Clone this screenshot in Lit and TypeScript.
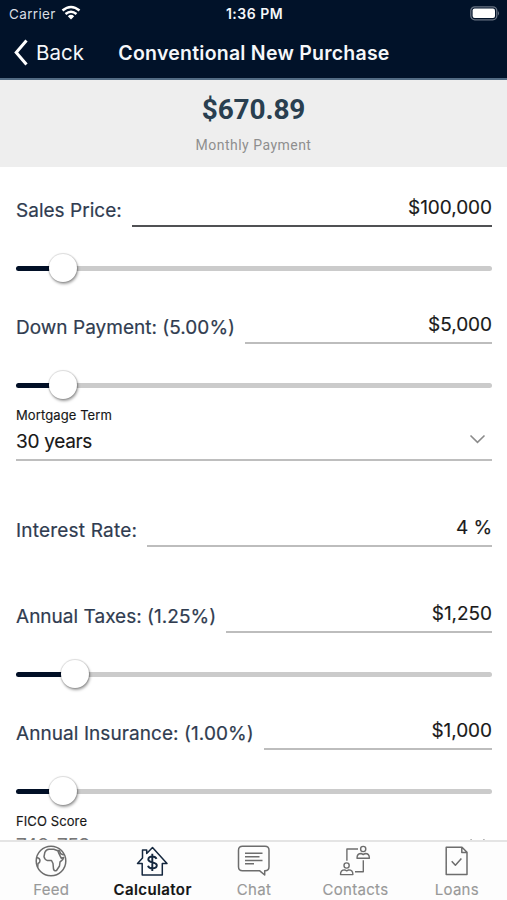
import { LitElement, html, css, svg } from "lit";
import { customElement, property } from "lit/decorators.js";
import { classMap } from "lit/directives/class-map.js";
import { styleMap } from "lit/directives/style-map.js";

@customElement("range-slider")
class RangeSlider extends LitElement {
  @property({ type: Number }) percent = 0;
  static styles = css`
    :host { display: flex; align-items: center; height: 30px; margin-top: 26px; }
    .fill { height: 5px; border-radius: 3px 0 0 3px; background: #010f26; }
    .thumb { width: 28px; height: 28px; margin: 0 -1px; border-radius: 50%; background: #fff; box-shadow: 0 0 1px 1px rgba(0,0,0,.13), 1px 2px 3px rgba(0,0,0,.38); z-index: 1; flex: none; }
    .rest { flex: 1; height: 5px; border-radius: 0 3px 3px 0; background: #cbcbcb; }
  `;
  render() {
    return html`
      <div class="fill" style=${styleMap({ width: `calc((100% - 26px) * ${this.percent / 100})` })}></div>
      <div class="thumb"></div>
      <div class="rest"></div>`;
  }
}

@customElement("amount-field")
class AmountField extends LitElement {
  @property() label = "";
  @property() value = "";
  @property({ type: Boolean, reflect: true }) focused = false;
  @property({ type: Boolean, reflect: true }) spaced = false;
  static styles = css`
    :host { display: flex; height: 61px; align-items: flex-end; color: #303c50; letter-spacing: .02px; }
    :host([spaced]) { height: 86px; }
    .label { font-size: 19px; line-height: 24px; margin-bottom: 4px; letter-spacing: inherit; white-space: nowrap; -webkit-text-stroke: .2px; }
    .value { flex: 1; margin-left: 10px; box-sizing: border-box; height: 38px; padding-top: 7px; border-bottom: 2px solid #bdbdbd; text-align: right; font-size: 19px; line-height: 24px; letter-spacing: -.05px; color: #1a1a1a; -webkit-text-stroke: .15px; }
    :host([focused]) .value { border-color: #505154; }
  `;
  render() {
    return html`<div class="label">${this.label}</div><div class="value">${this.value}</div>`;
  }
}

@customElement("select-field")
class SelectField extends LitElement {
  @property() label = "";
  @property() value = "";
  static styles = css`
    :host { display: block; height: 61px; box-sizing: border-box; border-bottom: 2px solid #bebebe; padding-top: 7px; color: #171717; }
    .label { font-size: 13px; line-height: 16px; letter-spacing: .1px; -webkit-text-stroke: .15px; }
    .line { display: flex; justify-content: space-between; align-items: center; height: var(--line-height, 36px); color: var(--value-color, inherit); padding-right: 6px; font-size: 19px; letter-spacing: -.3px; -webkit-text-stroke: .15px; }
    svg { width: 17px; height: 10px; margin-bottom: 4px; }
  `;
  render() {
    return html`<div class="label">${this.label}</div>
      <div class="line"><span>${this.value}</span>
        <svg viewBox="0 0 17 10" fill="none" stroke="#8b8b8b" stroke-width="1.6"><path d="M1.5 1.5 8.5 8.3 15.5 1.5" /></svg>
      </div>`;
  }
}

const icons = {
  Feed: svg`<circle cx="17" cy="17" r="14.800"/>
    <path d="M10.800 8.500q1.500-3.500 4.500-3.300l4.500 0 4 1.500 1.200 3 2.200 4.500 2.500-.8q-.3 2.500-3.700 4.600l-.5 4-3 4.500q-2.500.7-3-1.500l-.5-5.500-1.500-3-4 .1q-3-1-3.500-4Z M22.500 6.300l2.800.2 1.500 3.200 3 1.300M2.500 13.500q3.500.5 3.500 3.300 0 2-2 2.700l-.3 3.500"/>`,
  Calculator: svg`<path d="M2.500 19.500 7.500 14V6h4.200v3.500L17.500 3.500 32 19.500H27.300V31H7.200V19.500Z"/>
    <path d="M21.500 14.800c-.6-1.600-2.100-2.300-4.200-2.300-2.400 0-4 1.200-4 3 0 3.900 8.500 1.900 8.500 5.800 0 1.900-1.700 3.100-4.300 3.100-2.400 0-4-.9-4.500-2.700M17.300 9.800v17.300" stroke-width="1.900"/>`,
  Chat: svg`<path d="M5.500 2.200h22.500q4 0 4 4v16.500q0 4-4 4h-.3V31l-5.200-4.300H5.500q-4 0-4-4V6.200q0-4 4-4Z"/>
    <path d="M8 9.200h17.500M8 12.800h14.500M8 16.400h17.500M8 19.700h9" />`,
  Contacts: svg`<g stroke-width="1.400"><circle cx="25.200" cy="5" r="2.600"/><path d="M19 14.200q0-4.700 4.200-4.700l2 1 2-1q4.200 0 4.200 4.700ZM20 5H8.900v11.800"/>
    <circle cx="8.600" cy="21.500" r="2.600"/><path d="M2.500 30.600q0-4.700 4.200-4.700l2 1 2-1q4.200 0 4.200 4.700ZM17 27.700h8.300V16.200"/></g>`,
  Loans: svg`<path d="M7.200 3.200h15.800l5 5v22.300H7.200ZM22.800 3.400v5h5M12.700 17.300l3.700 4 6-6.800"/>`,
};

@customElement("tab-bar")
class TabBar extends LitElement {
  static styles = css`
    :host { display: flex; height: 60px; box-sizing: border-box; border-top: 2px solid #e4e4e4; background: #fdfdfd; }
    .tab { flex: 1; display: flex; flex-direction: column; align-items: center; padding-top: 2px; color: #999; font-size: 15px; line-height: 20px; letter-spacing: .3px; }
    svg { width: 34px; height: 34px; margin-bottom: 1px; fill: none; stroke: #6d6d6d; stroke-width: 1.500; stroke-linejoin: round; }
    span { padding: 1px 0 0 1px; -webkit-text-stroke: .15px; }
    .active { color: #151515; font-weight: 600; letter-spacing: .4px; }
    .active svg { stroke: #14273e; }
  `;
  render() {
    return Object.entries(icons).map(([name, icon]) => html`
      <div class=${classMap({ tab: true, active: name === "Calculator" })}>
        <svg viewBox="0 0 34 34">${icon}</svg><span>${name}</span>
      </div>`);
  }
}

@customElement("app-root")
class AppRoot extends LitElement {
  static styles = css`
    :host { display: flex; flex-direction: column; height: 900px; overflow: hidden; background: #fff; font-family: Inter, "Liberation Sans", sans-serif; }
    .top { background: #011229; color: #f5f7fa; height: 80px; box-sizing: border-box; border-bottom: 2px solid #526b84; flex: none; }
    .status { display: grid; grid-template-columns: 1fr auto 1fr; align-items: center; height: 27px; padding: 0 7px 0 9px; font-size: 13.500px; }
    .carrier { display: flex; align-items: center; gap: 5px; color: #d9dde2; letter-spacing: .35px; }
    .time { font-weight: 600; font-size: 14px; letter-spacing: .5px; }
    .battery { justify-self: end; }
    .wifi { width: 20px; height: 15px; margin-top: -2px; }
    .nav { display: grid; grid-template-columns: 1fr auto 1fr; align-items: center; height: 51px; padding: 0 13px 0 14px; }
    .back { display: flex; align-items: center; gap: 8px; font-size: 20.500px; }
    .title { font-size: 19.500px; font-weight: 600; letter-spacing: .24px; }
    .summary { height: 87px; flex: none; background: #eee; text-align: center; font-family: Roboto, sans-serif; }
    .amount { padding-top: 13px; font-size: 28px; line-height: 34px; font-weight: 700; color: #293f50; letter-spacing: -.15px; }
    .caption { margin-top: 9px; font-size: 14px; line-height: 18px; color: #8e8e8e; letter-spacing: .48px; }
    .form { flex: 1; min-height: 0; overflow: hidden; padding: 0 15px 0 16px; }
    .form > :first-child { height: 60px; }
    .rate { letter-spacing: .2px; }
    .insurance { letter-spacing: .07px; }
    .fico { --line-height: 32px; --value-color: #777; }
    tab-bar { flex: none; }
  `;
  render() {
    return html`
      <div class="top">
        <div class="status">
          <div class="carrier"><span>Carrier</span>
            <svg class="wifi" viewBox="0 0 20 15" fill="none" stroke="#fff" stroke-width="2.500"><path d="M1.500 5.500Q10-1.500 18.500 5.500M4.500 9Q10 4.500 15.500 9"/><path d="M6.800 11.200Q10 8.500 13.200 11.200L10 14.500Z" fill="#fff" stroke="none"/></svg>
          </div>
          <div class="time">1:36 PM</div>
          <svg class="battery" width="30" height="15" viewBox="0 0 30 15"><rect x=".8" y=".8" width="26" height="13" rx="4" fill="none" stroke="#687383" stroke-width="1.300"/><rect x="2.600" y="2.600" width="22.400" height="9.400" rx="2" fill="#fff"/><path d="M28 5q2 2.300 0 4.600Z" fill="#687383"/></svg>
        </div>
        <div class="nav">
          <div class="back"><svg width="14" height="27" viewBox="0 0 14 27" fill="none" stroke="#fff" stroke-width="3"><path d="M12.500 1.500 2.200 13.500 12.500 25.500"/></svg><span>Back</span></div>
          <div class="title">Conventional New Purchase</div>
        </div>
      </div>
      <div class="summary"><div class="amount">$670.89</div><div class="caption">Monthly Payment</div></div>
      <div class="form">
        <amount-field focused label="Sales Price:" value="$100,000"></amount-field>
        <range-slider percent="7.500"></range-slider>
        <amount-field label="Down Payment: (5.00%)" value="$5,000"></amount-field>
        <range-slider percent="7.500"></range-slider>
        <select-field label="Mortgage Term" value="30 years"></select-field>
        <amount-field class="rate" spaced label="Interest Rate:" value="4 %"></amount-field>
        <amount-field spaced label="Annual Taxes: (1.25%)" value="$1,250"></amount-field>
        <range-slider percent="10.200"></range-slider>
        <amount-field class="insurance" label="Annual Insurance: (1.00%)" value="$1,000"></amount-field>
        <range-slider percent="7.500"></range-slider>
        <select-field class="fico" label="FICO Score" value="740-759"></select-field>
      </div>
      <tab-bar></tab-bar>`;
  }
}
